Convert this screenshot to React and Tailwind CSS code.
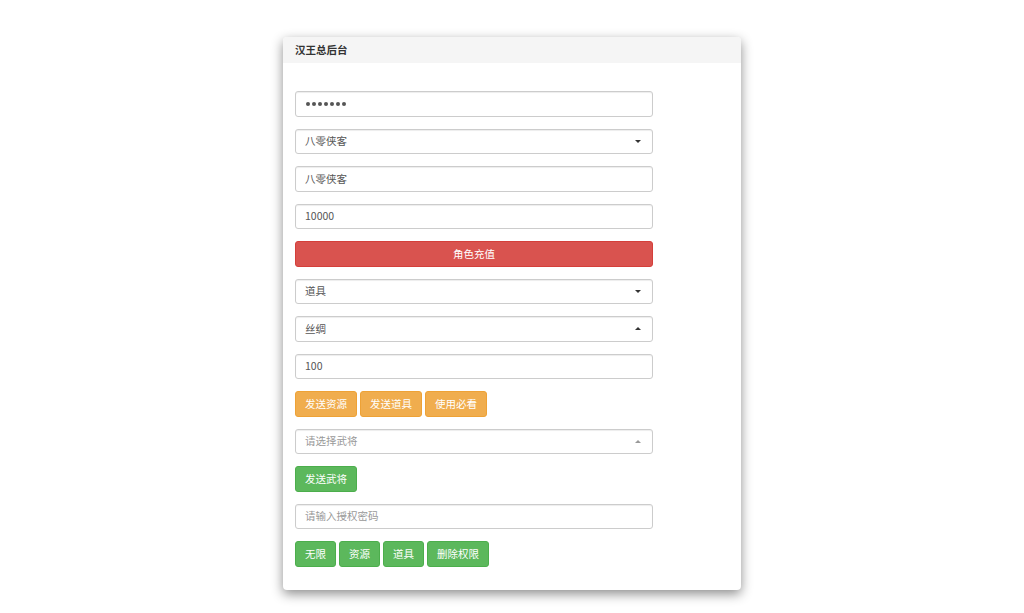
import React from "react";

const font = { fontFamily: '"Noto Sans CJK SC", "Liberation Sans", sans-serif' };

function Caret({ up, light }) {
  return (
    <span
      className={
        "ml-auto mr-[11px] h-0 w-0 border-x-[3.5px] border-x-transparent " +
        (up
          ? light
            ? "border-b-[3.5px] border-b-[#999]"
            : "border-b-[3.5px] border-b-[#333]"
          : "border-t-[3.5px] border-t-[#333]")
      }
    />
  );
}

function Field({ children, muted, caret, up, light }) {
  return (
    <div
      className={
        "mb-[12px] flex h-[25.5px] w-[358px] items-center rounded-[3px] border border-[#ccc] bg-white pl-[9px] text-[10.5px] shadow-[inset_0_1px_1px_rgba(0,0,0,0.075)] " +
        (muted ? "text-[#999]" : "text-[#555]")
      }
    >
      <span className="leading-none">{children}</span>
      {caret && <Caret up={up} light={light} />}
    </div>
  );
}

function Btn({ children, color }) {
  const cls =
    color === "orange"
      ? "bg-[#f0ad4e] border-[#eea236]"
      : "bg-[#5cb85c] border-[#4cae4c]";
  return (
    <div
      className={
        "flex h-[25.5px] items-center rounded-[3px] border px-[9px] text-[10.5px] leading-none text-white " +
        cls
      }
    >
      {children}
    </div>
  );
}

export default function App() {
  return (
    <div className="min-h-[613px] w-full bg-white pt-[37px]" style={font}>
      <div className="mx-auto w-[458px] rounded-[4px] bg-white shadow-[0_4px_12px_rgba(0,0,0,0.45)]">
        <div className="flex h-[26px] items-center rounded-t-[4px] bg-[#f5f5f5] px-[12px] text-[10.5px] font-bold text-[#333]">
          汉王总后台
        </div>
        <div className="px-[12px] pb-[23px] pt-[28px]">
          <div className="mb-[12px] flex h-[25.5px] w-[358px] items-center gap-[2px] rounded-[3px] border border-[#ccc] bg-white pl-[10px] shadow-[inset_0_1px_1px_rgba(0,0,0,0.075)]">
            {[0, 1, 2, 3, 4, 5, 6].map((i) => (
              <span key={i} className="h-[4px] w-[4px] rounded-full bg-[#555]" />
            ))}
          </div>
          <Field caret>八零侠客</Field>
          <Field>八零侠客</Field>
          <Field>10000</Field>
          <div className="mb-[12px] flex h-[25.5px] w-[358px] items-center justify-center rounded-[3px] border border-[#d43f3a] bg-[#d9534f] text-[10.5px] leading-none text-white">
            角色充值
          </div>
          <Field caret>道具</Field>
          <Field caret up>
            丝绸
          </Field>
          <Field>100</Field>
          <div className="mb-[12px] flex gap-[3px]">
            <Btn color="orange">发送资源</Btn>
            <Btn color="orange">发送道具</Btn>
            <Btn color="orange">使用必看</Btn>
          </div>
          <Field muted caret up light>
            请选择武将
          </Field>
          <div className="mb-[12px] flex gap-[3px]">
            <Btn color="green">发送武将</Btn>
          </div>
          <Field muted>请输入授权密码</Field>
          <div className="flex gap-[3px]">
            <Btn color="green">无限</Btn>
            <Btn color="green">资源</Btn>
            <Btn color="green">道具</Btn>
            <Btn color="green">删除权限</Btn>
          </div>
        </div>
      </div>
    </div>
  );
}
